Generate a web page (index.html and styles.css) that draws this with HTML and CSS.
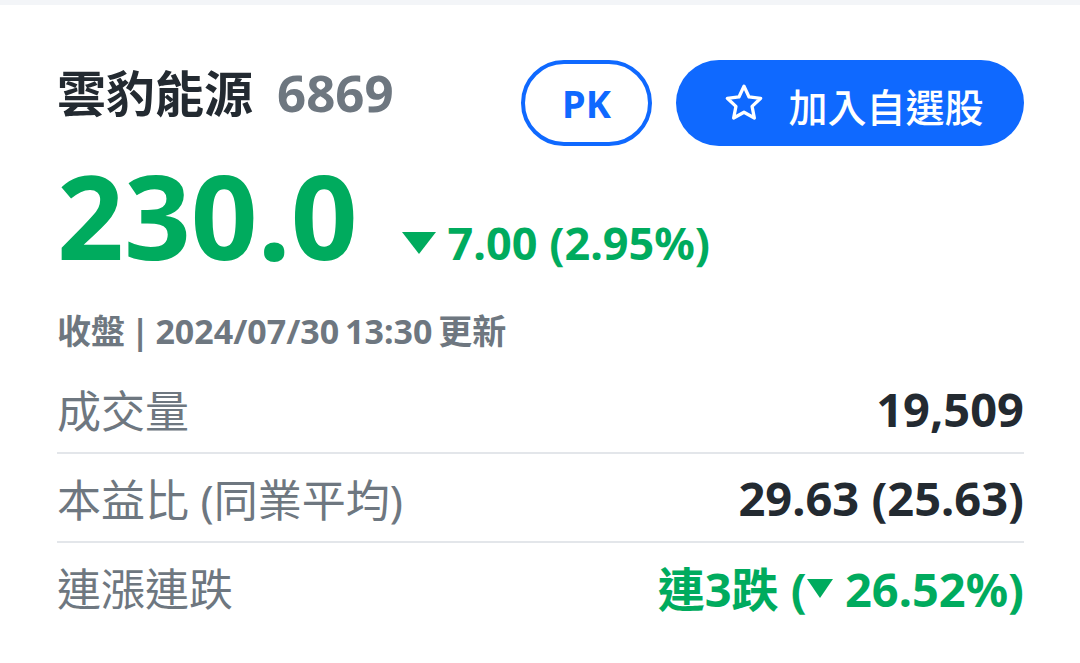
FILE: index.html
```html
<!DOCTYPE html>
<html lang="zh-Hant">
  <head>
    <meta charset="UTF-8" />
    <meta name="viewport" content="width=device-width, initial-scale=1.0" />
    <title>雲豹能源 6869</title>
    <link rel="stylesheet" href="styles.css">
  </head>
  <body>
    <div class="topbar"></div>
    <main class="quote">
      <div class="quote-head">
        <h1 class="name">雲豹能源<span class="symbol">6869</span></h1>
        <div class="actions">
          <button class="btn-pk">PK</button>
          <button class="btn-follow">
            <svg class="star" viewBox="0 0 24 24" width="44" height="44">
              <path d="M12 2.8l2.75 5.9 6.350.75-4.7 4.4 1.25 6.35L12 17.05 6.35 20.2 7.6 13.85l-4.7-4.4 6.35-.75z" fill="none" stroke="#fff" stroke-width="1.8" stroke-linejoin="round" />
            </svg>
            加入自選股
          </button>
        </div>
      </div>

      <div class="price-row">
        <span class="price">230.0</span>
        <span class="change"><span class="tri"></span>7.00 (2.95%)</span>
      </div>

      <p class="updated">收盤 | 2024/07/30 13:30 更新</p>

      <ul class="stats">
        <li>
          <span class="label">成交量</span>
          <span class="value">19,509</span>
        </li>
        <li>
          <span class="label">本益比 (同業平均)</span>
          <span class="value">29.63 (25.63)</span>
        </li>
        <li>
          <span class="label">連漲連跌</span>
          <span class="value down">連3跌 (<span class="tri-sm"></span> 26.52%)</span>
        </li>
      </ul>
    </main>
  </body>
</html>
```

FILE: styles.css
```css
body {
  margin: 0;
  background: #fff;
  font-family: "Noto Sans", "Noto Sans CJK TC", sans-serif;
  color: #232a31;
}
.topbar {
  height: 5px;
  background: #f3f5f8;
}
.quote {
  padding: 0 56px 0 57px;
}
.quote-head {
  display: flex;
  justify-content: space-between;
  margin-top: 55px;
}
.name {
  margin: 0;
  font-size: 49px;
  line-height: 64px;
  font-weight: 700;
  color: #232a31;
}
.symbol {
  margin-left: 24px;
  font-size: 51px;
  color: #6e7780;
}
.actions {
  display: flex;
  gap: 24px;
}
.btn-pk,
.btn-follow {
  height: 86px;
  border-radius: 43px;
  font-family: inherit;
  font-size: 38px;
  display: flex;
  align-items: center;
  justify-content: center;
}
.btn-pk {
  width: 131px;
  border: 4px solid #0f69ff;
  background: #fff;
  color: #0f69ff;
  font-weight: 700;
}
.btn-follow {
  width: 348px;
  border: none;
  background: #0f69ff;
  color: #fff;
  font-size: 39px;
  font-weight: 500;
  gap: 22px;
  padding: 4px 0 0 6px;
}
.star {
  display: block;
  margin-top: -4px;
}
.price-row {
  display: flex;
  align-items: baseline;
  margin-top: 10px;
  color: #00ab5e;
  font-weight: 700;
}
.price {
  font-size: 117px;
  line-height: 1;
}
.change {
  margin-left: 44px;
  font-size: 45px;
}
.tri {
  display: inline-block;
  width: 0;
  height: 0;
  border-left: 17px solid transparent;
  border-right: 17px solid transparent;
  border-top: 22px solid #00ab5e;
  margin-right: 12px;
  vertical-align: 6px;
}
.updated {
  margin: 38px 0 0;
  font-size: 34px;
  line-height: 40px;
  font-weight: 700;
  color: #6e7780;
  word-spacing: -3px;
}
.stats {
  list-style: none;
  margin: 14px 0 0;
  padding: 0;
}
.stats li {
  display: flex;
  justify-content: space-between;
  align-items: center;
  height: 87px;
  border-bottom: 2px solid #e3e6ea;
}
.stats li:last-child {
  border-bottom: none;
}
.label {
  font-size: 44px;
  color: #6e7780;
}
.value {
  font-size: 47px;
  font-weight: 700;
  color: #232a31;
}
.value.down {
  color: #00ab5e;
}
.tri-sm {
  display: inline-block;
  width: 0;
  height: 0;
  border-left: 13px solid transparent;
  border-right: 13px solid transparent;
  border-top: 19px solid #00ab5e;
  vertical-align: 9px;
}
```
